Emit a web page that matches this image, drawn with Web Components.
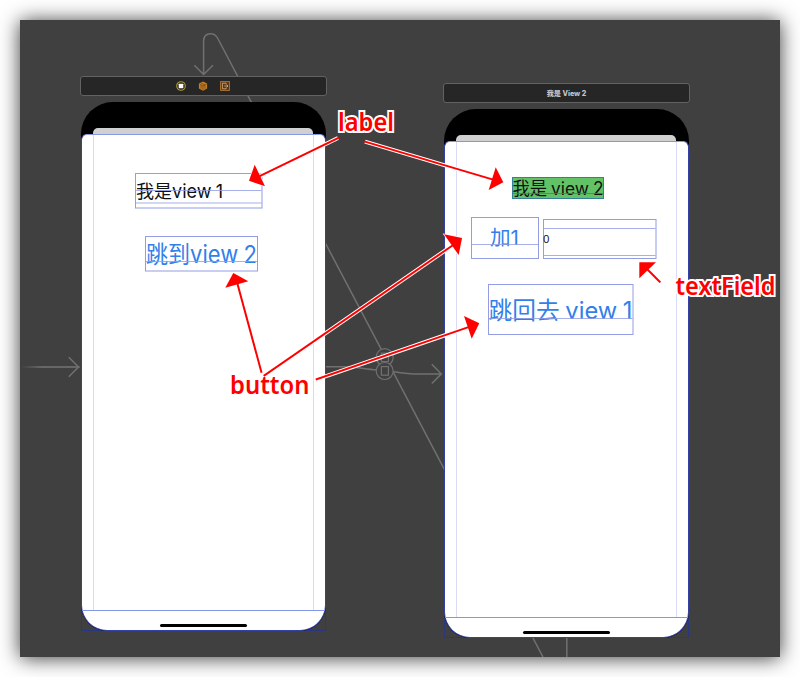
<!DOCTYPE html>
<html lang="zh">
<head>
<meta charset="utf-8">
<title>Storyboard</title>
<style>
html,body{margin:0;background:#fff;width:800px;height:677px;overflow:hidden}
body{font-family:Inter,"Noto Sans CJK SC",sans-serif}
</style>
</head>
<body>
<story-board>
  <segue-lines></segue-lines>
  <phone-scene style="--x:60px;--y:56px" icons>
    <view-item x="55" y="96.5" w="127.5" h="35.5" lines="17 29.5" text="我是view 1" tx="1" tw="87" base="24.5" size="18.7"></view-item>
    <view-item x="64.5" y="160" w="113" h="35.5" lines="25" text="跳到view 2" tx="1" tw="111" base="26.8" size="24.2" color="#337fea"></view-item>
  </phone-scene>
  <phone-scene style="--x:423px;--y:63px" name="我是 View 2">
    <view-item x="69" y="94" w="92" h="22" lines="16" text="我是 view 2" tx=".5" tw="91" base="17.5" size="18" fill="#62c366" line="#377e9d"></view-item>
    <view-item x="28" y="134" w="68" h="42" lines="27" text="加1" tx="19" tw="29" base="28.3" size="20" color="#337fea"></view-item>
    <view-item x="100" y="136" w="113.5" h="40" lines="9 36" text="0" tx="0" tw="6.5" base="23.5" size="10"></view-item>
    <view-item x="45" y="201" w="145.5" h="51" lines="34" text="跳回去 view 1" tx=".5" tw="144" base="34.6" size="24" color="#337fea"></view-item>
  </phone-scene>
</story-board>
<note-layer></note-layer>

<script>
const define = (name, render) => customElements.define(name, class extends HTMLElement {
  connectedCallback() {
    if (this.shadowRoot) return;
    this.attachShadow({mode: 'open'}).innerHTML = render(k => this.getAttribute(k));
  }
});

define('story-board', () => `
<style>
:host{display:block;position:relative;box-sizing:border-box;margin:20px;width:760px;height:637px;background:#404040;box-shadow:0 1px 19px rgba(0,0,0,.78)}
</style><slot></slot>`);

define('segue-lines', () => `
<style>:host{position:absolute;inset:0}svg{display:block}</style>
<svg width="760" height="637" viewBox="20 20 760 637" fill="none" stroke="#707070" stroke-width="1.5">
  <defs><linearGradient id="g" gradientUnits="userSpaceOnUse" x1="21" y1="0" x2="42" y2="0"><stop offset="0" stop-color="#404040"/><stop offset="1" stop-color="#747474"/></linearGradient></defs>
  <path d="M203.6 74V41Q203.8 33.7 210.5 33.7Q215.4 33.7 217.8 38.5L543 657M194.3 65.2l9.3 9.3 9.3-9.3M566.8 630v27"/>
  <path d="M326 366.8H345C358 367.2 366 369.3 376 369.8M393 371.8C400 372.3 407 374 418 374H441M431.8 364.3l9.6 9.6-9.6 9.6"/>
  <path d="M21 366.9L79 366.9V367.1L21 367.1Z" stroke="url(#g)" stroke-width="1.3"/>
  <path d="M68.8 357.3l9.7 9.7-9.7 9.7"/>
  <g fill="#404040" stroke-width="1.2"><circle cx="384.7" cy="357.2" r="8.5"/><rect x="381.4" y="353.2" width="7" height="8.4"/><circle cx="384.7" cy="371" r="8.5"/><rect x="381.4" y="366.6" width="7" height="8.6"/></g>
</svg>`);

define('phone-scene', a => `
<style>
:host{position:absolute;left:var(--x);top:var(--y);width:247px;height:556px}
header{box-sizing:border-box;height:20px;border:1px solid #626262;border-radius:3px;background:#262626;display:flex;align-items:center;justify-content:center;gap:12px;color:#c4c4c4;font-size:7.1px;font-weight:800;line-height:1;white-space:pre}
header span{padding-top:1px}
header svg{margin-right:1px;margin-left:-1px}
svg{display:block}
main{box-sizing:border-box;position:relative;margin:6px 1px 0;height:529px;background:#000;border-radius:32px 32px 26px 26px;overflow:hidden}
.sheet{position:absolute;left:12px;right:13px;top:26px;height:20px;background:#cfd0cf;border-radius:5px 5px 0 0}
.screen{position:absolute;inset:32px 0 0 0;box-sizing:border-box;background:#fff;border:1px solid #8290e6;border-color:#8797e8 #3340a5 #3340a5;border-radius:6px 6px 26px 26px}
.safe{position:absolute;left:0;right:0;top:0;height:475px;border-bottom:1px solid #8496e8}
.margins{height:475px;margin:0 11px;border:solid #dadcf6;border-width:0 1px}
.home{position:absolute;left:78px;bottom:3px;width:87px;height:3px;border-radius:2px;background:#000}
.edge{position:absolute;left:1px;right:1px;bottom:1px;height:21px;box-sizing:border-box;border:1px solid #293782;border-top:0}
</style>
<header>${a('icons') !== null ? `
<svg width="10" height="10" viewBox="0 0 10 10"><circle cx="5" cy="5" r="4.3" fill="#25240e" stroke="#b3983c" stroke-width="1.1"/><rect x="2.7" y="2.7" width="4.6" height="4.6" rx=".5" fill="#fff"/></svg>
<svg width="10" height="10" viewBox="0 0 10 10"><path d="M5 .4L9.1 2.6V7.4L5 9.7 .9 7.4V2.6Z" fill="#c77f23"/><path d="M1.5 3L5 4.9 8.5 3M5 4.9V9M3 2L7 4.1M3.1 4v3.8M7 4v3.8" fill="none" stroke="#704516" stroke-width=".7"/></svg>
<svg width="10" height="10" viewBox="0 0 10 10"><rect x=".6" y=".6" width="8.8" height="8.8" fill="#553614" stroke="#ad7230" stroke-width="1"/><path d="M6.2 3.5V2.2H2.4V7.8H6.2V6.5M4.2 5H8M6.7 3.8L8 5 6.7 6.2" fill="none" stroke="#d9b487" stroke-width=".8"/></svg>` : `<span>${a('name')}</span>`}</header>
<div class="edge"></div>
<main><div class="sheet"></div><div class="screen"><div class="safe"><div class="margins"></div></div><div class="home"></div></div></main>
<slot></slot>`);

define('view-item', a => {
  const line = a('line') || '#929de3', w = +a('w'), h = +a('h');
  return `
<style>
:host{position:absolute;left:${a('x')}px;top:${a('y')}px;width:${w}px;height:${h}px}
svg{display:block;overflow:visible}
text{font-family:Inter,"Noto Sans CJK SC",sans-serif;white-space:pre;word-spacing:-1px}
</style>
<svg width="${w}" height="${h}">
<rect x=".5" y=".5" width="${w - 1}" height="${h - 1}" fill="${a('fill') || '#fff'}" stroke="${line}"/>
<text x="${a('tx')}" y="${a('base')}" font-size="${a('size')}" textLength="${a('tw')}" lengthAdjust="spacingAndGlyphs" fill="${a('color') || '#111'}">${a('text')}</text>
${a('lines').split(' ').map(y => `<path d="M1 ${+y + .5}H${w - 1}" stroke="${line}" opacity=".8"/>`).join('')}
</svg>`;
});

define('note-layer', () => {
  const arrows = [
    ['M338 138L259 176.5', '254.7,164.7 249,180.7 265,186.3'],
    ['M365 141.7L493 179.6', '495.7,167.3 503.3,182.3 488.7,190'],
    ['M261.3 371.7L237.5 284', '233.3,273 248.3,281.3 225.3,287.7'],
    ['M264.5 375.3L452 245.8', '444,234.3 462,238 458.7,255'],
    ['M316.7 379.3L469 327', '464,316 479.3,323.3 471.7,338.7'],
    ['M659.7 281.7L647 269', '639.3,262.3 656,262.3 639.3,278.3']];
  const notes = [['label', 338, 131.2, 56], ['button', 230, 394, 79.5], ['textField', 675.5, 294.8, 100]];
  return `
<style>
:host{position:absolute;inset:0;pointer-events:none}
text{font-family:"Noto Sans","Open Sans",sans-serif;font-size:25.5px;font-weight:600;fill:#f00;stroke:#fff;stroke-width:4;paint-order:stroke;stroke-linejoin:miter}
</style>
<svg width="800" height="677">
${notes.map(([t, x, y, w]) => `<text x="${x}" y="${y}" textLength="${w}" lengthAdjust="spacingAndGlyphs">${t}</text>`).join('')}
${arrows.map(([d, p]) => `<g><path d="${d}" stroke="#fff" stroke-width="4"/><polygon points="${p}" fill="#f00" stroke="#fff" stroke-width="1.2" paint-order="stroke"/><path d="${d}" stroke="#f00" stroke-width="2" stroke-linecap="square"/></g>`).join('')}
</svg>`;
});
</script>
</body>
</html>
